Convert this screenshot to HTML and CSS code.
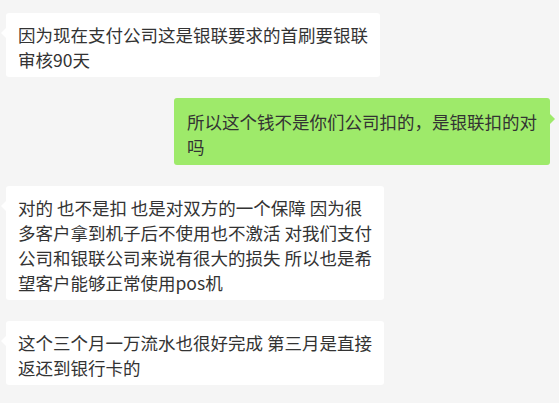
FILE: index.html
```html
<!DOCTYPE html>
<html>

<head>
	<meta charset="utf-8">
	<title>聊天记录</title>
	<link rel="stylesheet" href="styles.css">
</head>

<body>
	<div class="chat">
		<div class="row left">
			<div class="bubble">因为现在支付公司这是银联要求的首刷要银联<br>审核90天</div>
		</div>
		<div class="row right">
			<div class="bubble mine">所以这个钱不是你们公司扣的，是银联扣的对<br>吗</div>
		</div>
		<div class="row left">
			<div class="bubble">对的 也不是扣 也是对双方的一个保障 因为很<br>多客户拿到机子后不使用也不激活 对我们支付<br>公司和银联公司来说有很大的损失 所以也是希<br>望客户能够正常使用pos机</div>
		</div>
		<div class="row left">
			<div class="bubble">这个三个月一万流水也很好完成 第三月是直接<br>返还到银行卡的</div>
		</div>
	</div>
</body>

</html>
```

FILE: styles.css
```css
body {
	margin: 0;
	background-color: #f5f5f5;
	font-family: "Noto Sans CJK SC", "Noto Sans", sans-serif;
}

/* список сообщений */
.chat {
	display: flex;
	flex-direction: column;
	gap: 21px;
	padding: 13px 9px 0 6px;
}

.row {
	display: flex;
}

.row.right {
	justify-content: flex-end;
}

/* облачко сообщения */
.bubble {
	position: relative;
	background-color: #ffffff;
	color: #333333;
	font-size: 17.5px;
	line-height: 25px;
	padding: 9px 12px 5px 12px;
	border-radius: 3px;
	white-space: nowrap;
}

/* хвостик слева */
.bubble::before {
	content: "";
	position: absolute;
	left: -5px;
	top: 15px;
	border-top: 5px solid transparent;
	border-bottom: 5px solid transparent;
	border-right: 5px solid #ffffff;
}

.bubble.mine {
	background-color: #9eea6a;
	padding: 11px 13px 6px 13px;
}

.bubble.mine::before {
	left: auto;
	right: -5px;
	top: 16px;
	border-right: none;
	border-left: 5px solid #9eea6a;
}
```
